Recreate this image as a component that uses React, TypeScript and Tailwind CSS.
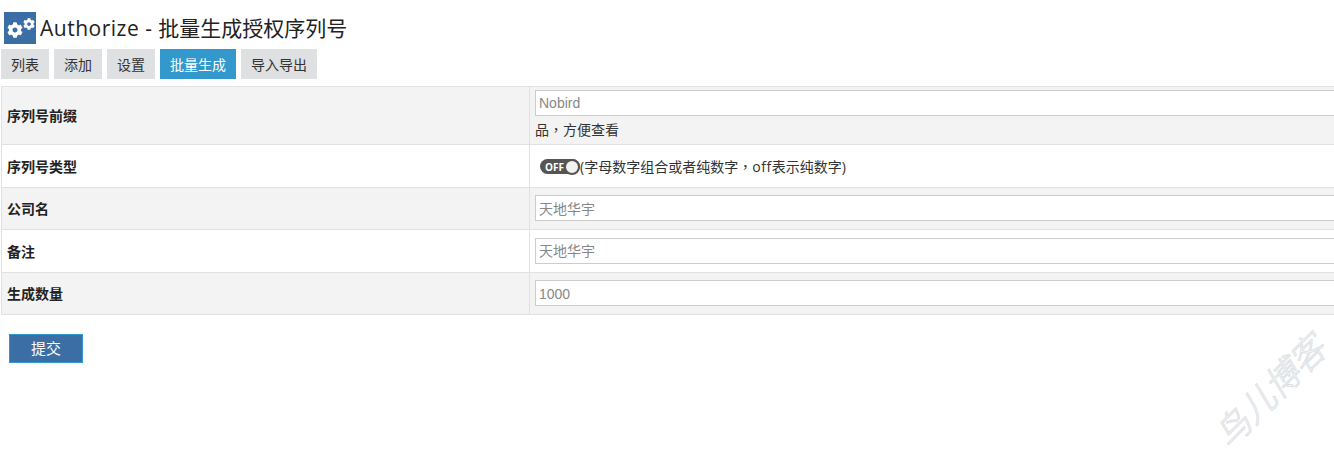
import { FaCog } from "react-icons/fa";

const tabs = [
  { label: "列表", w: "w-[48px]" },
  { label: "添加", w: "w-[48px]" },
  { label: "设置", w: "w-[48px]" },
  { label: "批量生成", w: "w-[76px]", active: true },
  { label: "导入导出", w: "w-[76px]" },
];

function TextInput({ placeholder, raised }: { placeholder: string; raised?: boolean }) {
  return (
    <input
      placeholder={placeholder}
      className={`block h-[26px] w-[900px] border border-[#ccc] bg-white px-[3px] text-[14px] placeholder:text-[#888] font-['Liberation_Sans','Noto_Sans_CJK_SC',sans-serif] ${
        raised ? "" : "pt-[1px]"
      }`}
    />
  );
}

function Comma() {
  return <span className="font-['Noto_Sans_CJK_TC',sans-serif]">，</span>;
}

function Row({
  label,
  shaded,
  height,
  children,
}: {
  label: string;
  shaded?: boolean;
  height: string;
  children: React.ReactNode;
}) {
  return (
    <div className={`flex border-b border-[#e1e1e1] ${height} ${shaded ? "bg-[#f3f3f3]" : "bg-white"}`}>
      <div className="flex w-[528px] shrink-0 items-center border-r border-[#e1e1e1] pl-[5px] text-[14px] font-bold text-[#222]">
        {label}
      </div>
      <div className="flex-1 pl-[5px]">{children}</div>
    </div>
  );
}

export default function App() {
  return (
    <div className="relative h-[453px] w-[1334px] overflow-hidden bg-white font-['Open_Sans','Noto_Sans_CJK_SC',sans-serif] text-[14px] text-[#333]">
      <div className="flex items-center pl-[4px] pt-[12px]">
        <div className="h-[32px] w-[32px] bg-[#3a6ea5] text-white">
          <svg viewBox="0 0 32 32" className="h-[32px] w-[32px]">
            <FaCog x={3} y={10} size={16} />
            <FaCog x={19} y={6} size={12} />
          </svg>
        </div>
        <h1 className="ml-[4px] text-[21px] leading-[32px] text-[#222]">
          <span className="tracking-[0.5px]">Authorize - </span>批量生成授权序列号
        </h1>
      </div>

      <div className="mt-[5px] flex gap-[5px] pl-[1px]">
        {tabs.map((tab) => (
          <div
            key={tab.label}
            className={`flex h-[30px] items-center justify-center ${tab.w} ${
              tab.active ? "bg-[#3399cc] text-white" : "bg-[#dfe0e1] text-[#333]"
            }`}
          >
            {tab.label}
          </div>
        ))}
      </div>

      <div className="ml-[1px] mt-[7px] border-l border-t border-[#e1e1e1]">
        <Row label="序列号前缀" shaded height="h-[58px]">
          <div className="pt-[3px]">
            <TextInput placeholder="Nobird" raised />
            <p className="mt-[3px] leading-[20px] text-[#333]">
              品<Comma />方便查看
            </p>
          </div>
        </Row>
        <Row label="序列号类型" height="h-[43px]">
          <div className="flex h-full items-center pl-[5px] pt-[1px]">
            <span className="relative flex h-[15px] w-[40px] items-center rounded-full bg-[#555] pl-[5px] text-[10px] font-bold leading-none text-white">
              OFF
              <span className="absolute right-0 top-[-0.5px] h-[16px] w-[16px] rounded-full border-2 border-[#555] bg-[#f2f2f2]" />
            </span>
            <span>
              (字母数字组合或者纯数字
              <Comma />
              <span className="tracking-[0.6px]">off</span>表示纯数字)
            </span>
          </div>
        </Row>
        <Row label="公司名" shaded height="h-[42px]">
          <div className="pt-[7px]">
            <TextInput placeholder="天地华宇" />
          </div>
        </Row>
        <Row label="备注" height="h-[43px]">
          <div className="pt-[8px]">
            <TextInput placeholder="天地华宇" raised />
          </div>
        </Row>
        <Row label="生成数量" shaded height="h-[42px]">
          <div className="pt-[7px]">
            <TextInput placeholder="1000" />
          </div>
        </Row>
      </div>

      <div className="pl-[9px] pt-[19px]">
        <button className="h-[29px] w-[74px] border border-[#3399cc] bg-[#3a6ea5] text-[15px] text-white">提交</button>
      </div>

      <div className="pointer-events-none absolute left-[1194px] top-[372px] w-[148px] -rotate-45 whitespace-nowrap text-center font-['Noto_Sans_CJK_SC',sans-serif] text-[35px] font-light italic leading-none text-white [-webkit-text-stroke:1px_#dde1e4]">
        鸟儿博客
      </div>
    </div>
  );
}
